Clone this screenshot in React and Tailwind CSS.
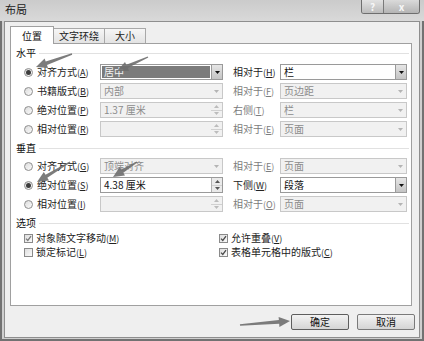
import React from "react";

// annotation arrow outline: tail -> tip
const arrowPts = (x1, y1, x2, y2, head = 11, hw = 5, s0 = 0.7, s1 = 1.8) => {
  const dx = x2 - x1, dy = y2 - y1;
  const L = Math.sqrt(dx * dx + dy * dy);
  const ux = dx / L, uy = dy / L, nx = -uy, ny = ux;
  const bx = x2 - ux * head, by = y2 - uy * head;
  const p = [
    [x1 + nx * s0, y1 + ny * s0],
    [bx + nx * s1, by + ny * s1],
    [bx + nx * hw, by + ny * hw],
    [x2, y2],
    [bx - nx * hw, by - ny * hw],
    [bx - nx * s1, by - ny * s1],
    [x1 - nx * s0, y1 - ny * s0],
  ];
  return p.map((q) => q.map((v) => v.toFixed(1)).join(",")).join(" ");
};

const ARROWS = [
  [72, 54, 36, 67],
  [148, 57, 117, 71],
  [70, 162, 37, 182],
  [137, 162, 113, 177],
  [240, 325, 290, 321],
];

const Acc = ({ t, k }) => (
  <span>
    {t}
    <span className="text-[9px]">
      (<span className="underline">{k}</span>)
    </span>
  </span>
);

const Radio = ({ on }) => (
  <span className="w-[9px] h-[9px] shrink-0 rounded-full border border-[#8e8e8e] bg-gradient-to-br from-[#dcdcdc] to-[#fbfbfb] flex items-center justify-center">
    {on && <span className="w-[5px] h-[5px] rounded-full bg-[#3c3c3c]" />}
  </span>
);

const Check = ({ on, light }) => (
  <span className="w-[9px] h-[9px] shrink-0 border border-[#8a8a8a] bg-gradient-to-br from-[#dedede] to-[#fafafa] flex items-center justify-center">
    {on && (
      <svg width="7" height="7" viewBox="0 0 7 7">
        <path d="M1 3.6 L2.8 5.4 L6 1.2" fill="none" stroke={light ? "#7a7a7a" : "#4a4a4a"} strokeWidth="1.3" />
      </svg>
    )}
  </span>
);

const DropBtn = ({ off }) =>
  off ? (
    <div className="w-[11px] flex items-center justify-center">
      <svg width="5" height="3" viewBox="0 0 5 3"><path d="M0 0 H5 L2.5 3 Z" fill="#b4b4b4" /></svg>
    </div>
  ) : (
    <div className="w-[11px] border-l border-[#9a9a9a] bg-gradient-to-b from-[#e6e6e6] to-[#c4c4c4] flex items-center justify-center">
      <svg width="5" height="3" viewBox="0 0 5 3"><path d="M0 0 H5 L2.5 3 Z" fill="#111" /></svg>
    </div>
  );

const SpinBtn = ({ off }) => (
  <div className={`w-[11px] flex flex-col ${off ? "" : "border-l border-[#b0b0b0] bg-[#eaeaea]"}`}>
    <div className="flex-1 flex items-center justify-center border-b border-[#d0d0d0]">
      <svg width="5" height="3" viewBox="0 0 5 3"><path d="M0 3 H5 L2.5 0 Z" fill={off ? "#bcbcbc" : "#555"} /></svg>
    </div>
    <div className="flex-1 flex items-center justify-center">
      <svg width="5" height="3" viewBox="0 0 5 3"><path d="M0 0 H5 L2.5 3 Z" fill={off ? "#bcbcbc" : "#555"} /></svg>
    </div>
  </div>
);

const Field = ({ v, spin, off, sel, w }) => (
  <div
    className={`${w} h-[16px] shrink-0 flex border text-[10px] leading-none ${
      off ? "border-[#c8c8c8] bg-[#f1f1f1] text-[#8c8c8c]" : "border-[#9a9a9a] bg-white text-[#111]"
    }`}
  >
    {sel ? (
      <div className="flex-1 p-px flex">
        <span className="flex-1 bg-[#7b7b7b] text-[#f2f2f2] flex items-center px-[2px]">{v}</span>
      </div>
    ) : (
      <div className="flex-1 flex items-center px-[3px] whitespace-nowrap">{v}</div>
    )}
    {spin ? <SpinBtn off={off} /> : <DropBtn off={off} />}
  </div>
);

const Row = ({ on, label, left, right }) => (
  <div className="flex items-center h-[16px] pl-[13px]">
    <Radio on={on} />
    <span className="w-[4px]" />
    <span className="w-[63px] text-[10px] leading-none text-[#222] whitespace-nowrap">{label}</span>
    <Field w="w-[123px]" {...left} />
    <span
      className={`ml-[10px] w-[47px] text-[10px] leading-none whitespace-nowrap ${
        right.off ? "text-[#7c7c7c]" : "text-[#222]"
      }`}
    >
      {right.label}
    </span>
    <Field w="w-[127px]" {...right} />
  </div>
);

const Head = ({ t, cls }) => (
  <div className={`flex items-center h-[16px] pl-[5px] pr-[2px] ${cls}`}>
    <span className="text-[10px] leading-none text-[#111]">{t}</span>
    <span className="flex-1 h-px bg-[#e1e1e1] ml-[3px]" />
  </div>
);

const CheckItem = ({ on, light, children, w }) => (
  <div className={`flex items-center gap-[3px] h-[14px] ${w}`}>
    <Check on={on} light={light} />
    <span className="text-[10px] leading-none text-[#222] whitespace-nowrap">{children}</span>
  </div>
);

export default function App() {
  return (
    <div className="relative w-[424px] h-[341px] flex flex-col bg-[#cfcfcf] overflow-hidden [font-family:'Noto_Sans_CJK_SC','Noto_Sans',sans-serif]">
      {/* title bar */}
      <div className="h-[21px] shrink-0 flex justify-between bg-gradient-to-b from-[#cbcbcb] to-[#d9d9d9]">
        <span className="pl-[5px] pt-[4px] text-[11px] leading-none text-[#1a1a1a]">布局</span>
        <div className="flex self-start mr-[4px] h-[14px] border border-t-0 border-[#6e6e6e] rounded-b-[3px] overflow-hidden">
          <div className="w-[22px] flex items-center justify-center bg-gradient-to-b from-[#e2e2e2] to-[#bcbcbc] border-r border-[#7a7a7a] text-[10px] font-bold text-[#f7f7f7] leading-none">?</div>
          <div className="w-[35px] flex items-center justify-center bg-gradient-to-b from-[#dadada] to-[#b4b4b4] text-[10px] font-bold text-[#f7f7f7] leading-none">x</div>
        </div>
      </div>

      {/* frame */}
      <div className="flex-1 flex border-l-[2px] border-r-[2px] border-b-[2px] border-[#727272] px-[2px] pb-px">
        <div className="flex-1 flex flex-col border border-[#8e8e8e] bg-[#efefef] pt-[4px] pl-[5px]">
          {/* tabs */}
          <div className="flex items-end h-[17px] text-[10px] leading-none">
            <div className="relative z-10 -mb-px w-[44px] h-[18px] bg-white border border-b-0 border-[#a0a0a0] flex items-center justify-center text-[#111]">位置</div>
            <div className="w-[51px] h-[15px] bg-gradient-to-b from-[#f6f6f6] to-[#e3e3e3] border border-l-0 border-b-0 border-[#a8a8a8] flex items-center justify-center text-[#222]">文字环绕</div>
            <div className="w-[41px] h-[15px] bg-gradient-to-b from-[#f6f6f6] to-[#e3e3e3] border border-l-0 border-b-0 border-[#a8a8a8] flex items-center justify-center text-[#222]">大小</div>
          </div>

          {/* panel */}
          <div className="w-[402px] h-[263px] bg-white border border-[#a0a0a0] flex flex-col">
            <Head t="水平" cls="mt-px" />
            <div className="flex flex-col gap-[3px] mt-[3px]">
              <Row on label={<Acc t="对齐方式" k="A" />} left={{ v: "居中", sel: true }} right={{ label: <Acc t="相对于" k="H" />, v: "栏" }} />
              <Row label={<Acc t="书籍版式" k="B" />} left={{ v: "内部", off: true }} right={{ label: <Acc t="相对于" k="F" />, v: "页边距", off: true }} />
              <Row label={<Acc t="绝对位置" k="P" />} left={{ v: "1.37 厘米", spin: true, off: true }} right={{ label: <Acc t="右侧" k="T" />, v: "栏", off: true }} />
              <Row label={<Acc t="相对位置" k="R" />} left={{ v: "", spin: true, off: true }} right={{ label: <Acc t="相对于" k="E" />, v: "页面", off: true }} />
            </div>

            <Head t="垂直" cls="mt-[3px]" />
            <div className="flex flex-col gap-[3px] mt-[2px]">
              <Row label={<Acc t="对齐方式" k="G" />} left={{ v: "顶端对齐", off: true }} right={{ label: <Acc t="相对于" k="E" />, v: "页面", off: true }} />
              <Row on label={<Acc t="绝对位置" k="S" />} left={{ v: "4.38 厘米", spin: true }} right={{ label: <Acc t="下侧" k="W" />, v: "段落" }} />
              <Row label={<Acc t="相对位置" k="I" />} left={{ v: "", spin: true, off: true }} right={{ label: <Acc t="相对于" k="O" />, v: "页面", off: true }} />
            </div>

            <Head t="选项" cls="mt-[3px]" />
            <div className="flex pl-[13px]">
              <div className="flex flex-col w-[195px]">
                <CheckItem on light><Acc t="对象随文字移动" k="M" /></CheckItem>
                <CheckItem><Acc t="锁定标记" k="L" /></CheckItem>
              </div>
              <div className="flex flex-col">
                <CheckItem on><Acc t="允许重叠" k="V" /></CheckItem>
                <CheckItem on><Acc t="表格单元格中的版式" k="C" /></CheckItem>
              </div>
            </div>
          </div>

          {/* buttons */}
          <div className="flex justify-end gap-[8px] mt-[8px] pr-[4px] text-[10px] leading-none text-[#111]">
            <button className="w-[58px] h-[16px] rounded-[2px] border border-[#5e5e5e] bg-gradient-to-b from-[#f3f3f3] to-[#d5d5d5] flex items-center justify-center">确定</button>
            <button className="w-[58px] h-[16px] rounded-[2px] border border-[#7a7a7a] bg-gradient-to-b from-[#f3f3f3] to-[#d5d5d5] flex items-center justify-center">取消</button>
          </div>
        </div>
      </div>

      {/* annotation arrows */}
      <svg className="absolute inset-0 pointer-events-none" width="424" height="341">
        {ARROWS.map((a, i) => (
          <polygon key={i} points={arrowPts(...a)} fill="#6e6e6e" fillOpacity="0.9" />
        ))}
      </svg>
    </div>
  );
}
